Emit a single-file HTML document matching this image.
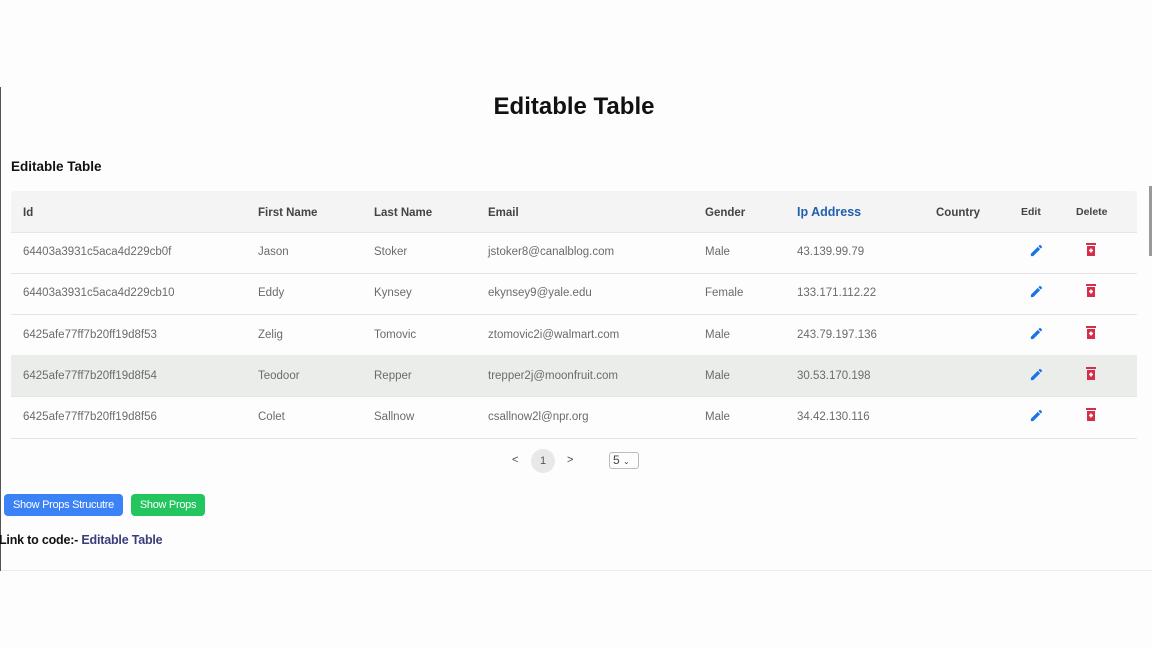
<!DOCTYPE html>
<html><head><style>
body{margin:0;width:1152px;height:648px;background:#fdfdfd;position:relative;overflow:hidden;font-family:"Liberation Sans",sans-serif}
.a{position:absolute;white-space:nowrap}
.h{font-size:11.5px;color:#444;font-weight:bold;top:207px}
.c{font-size:11.5px;color:#6b6b6b}
.row{position:absolute;left:11px;width:1126px;height:41px;border-bottom:1px solid #e6e6e6}
</style></head><body>
<div class="a" style="left:0;top:87px;width:1px;height:484px;background:#555"></div>
<div class="a" style="left:1px;top:570px;width:1151px;height:1px;background:#eee"></div>
<div class="a" style="left:1149px;top:186px;width:3px;height:70px;background:#999"></div>
<div class="a" style="left:0;width:1148px;top:93px;text-align:center;font-size:24px;font-weight:bold;color:#111">Editable Table</div>
<div class="a" style="left:11px;top:159px;font-size:13.5px;font-weight:bold;color:#111">Editable Table</div>
<div class="row" style="top:191px;background:#f4f4f4;border-radius:4px 4px 0 0"></div>
<div class="row" style="top:232px"></div>
<div class="row" style="top:273px"></div>
<div class="row" style="top:314px"></div>
<div class="row" style="top:355px;background:#ebedeb"></div>
<div class="row" style="top:397px"></div>
<div class="a h" style="left:23px">Id</div>
<div class="a h" style="left:258px">First Name</div>
<div class="a h" style="left:374px">Last Name</div>
<div class="a h" style="left:488px">Email</div>
<div class="a h" style="left:705px">Gender</div>
<div class="a" style="left:797px;top:205px;font-size:12.5px;font-weight:bold;color:#1f5fae">Ip Address</div>
<div class="a h" style="left:936px">Country</div>
<div class="a h" style="left:1021px;top:206px;font-size:10.5px">Edit</div>
<div class="a h" style="left:1076px;top:206px;font-size:10.5px">Delete</div>
<div id="rows"></div>
<script>
var d=[["64403a3931c5aca4d229cb0f","Jason","Stoker","jstoker8@canalblog.com","Male","43.139.99.79"],
["64403a3931c5aca4d229cb10","Eddy","Kynsey","ekynsey9@yale.edu","Female","133.171.112.22"],
["6425afe77ff7b20ff19d8f53","Zelig","Tomovic","ztomovic2i@walmart.com","Male","243.79.197.136"],
["6425afe77ff7b20ff19d8f54","Teodoor","Repper","trepper2j@moonfruit.com","Male","30.53.170.198"],
["6425afe77ff7b20ff19d8f56","Colet","Sallnow","csallnow2l@npr.org","Male","34.42.130.116"]];
var xs=[23,258,374,488,705,797],tops=[246,287,329,370,411],h="";
d.forEach(function(r,i){var t=tops[i];r.forEach(function(v,j){h+='<div class="a c" style="left:'+xs[j]+'px;top:'+t+'px">'+v+'</div>'});
h+='<svg class="a" style="left:1029px;top:'+(t-3)+'px" width="15" height="15" viewBox="0 0 24 24"><path fill="#1a73e8" d="M3 17.25V21h3.75L17.8 9.94l-3.75-3.75L3 17.25zM20.7 7.04a1 1 0 000-1.41l-2.34-2.34a1 1 0 00-1.41 0l-1.83 1.83 3.75 3.75 1.83-1.83z"/></svg>';
h+='<svg class="a" style="left:1086px;top:'+(t-3)+'px" width="10" height="13" viewBox="0 0 10 13"><rect x="0" y="0" width="10" height="2" fill="#d32f4a"/><rect x="1" y="3" width="8" height="10" fill="#d32f4a"/><rect x="4.2" y="5.5" width="1.6" height="4" fill="#fff"/><rect x="3" y="6.7" width="4" height="1.6" fill="#fff"/></svg>';});
document.getElementById('rows').innerHTML=h;
</script>
<div class="a" style="left:512px;top:454px;font-size:11px;color:#444">&lt;</div>
<div class="a" style="left:531px;top:449px;width:24px;height:24px;border-radius:12px;background:#e8e8e8;text-align:center;line-height:24px;font-size:11px;color:#555">1</div>
<div class="a" style="left:567px;top:454px;font-size:11px;color:#444">&gt;</div>
<div class="a" style="left:609px;top:452px;width:30px;height:17px;border:1px solid #bbb;border-radius:3px;font-size:12px;color:#444;line-height:15px;padding-left:3px;box-sizing:border-box">5 <span style="font-size:8px">&#8964;</span></div>
<div class="a" style="left:4px;top:494px;width:119px;height:22px;background:#3b82f6;border-radius:4px;color:#fff;font-size:11px;text-align:center;line-height:22px;letter-spacing:-0.3px">Show Props Strucutre</div>
<div class="a" style="left:131px;top:494px;width:74px;height:22px;background:#22c55e;border-radius:4px;color:#fff;font-size:11px;text-align:center;line-height:22px;letter-spacing:-0.3px">Show Props</div>
<div class="a" style="left:-1px;top:533px;font-size:12.5px;font-weight:bold;color:#111;letter-spacing:-0.2px">Link to code:- <span style="color:#3b3d7a">Editable Table</span></div>
</body></html>
